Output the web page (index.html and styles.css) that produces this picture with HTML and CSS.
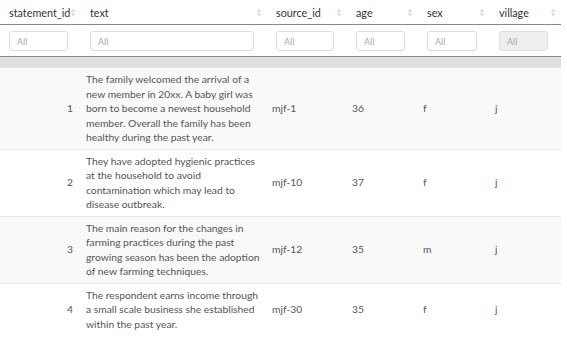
FILE: index.html
```html
<!DOCTYPE html>
<html lang="en">
<head>
    <meta charset="UTF-8">
    <title>Statements</title>
    <link rel="stylesheet" href="styles.css">
</head>
<body>
    <table class="data-table">
        <colgroup>
            <col class="c-id">
            <col class="c-text">
            <col class="c-src">
            <col class="c-age">
            <col class="c-sex">
            <col class="c-village">
        </colgroup>
        <thead>
            <tr class="head-row">
                <th><div class="th-inner"><span>statement_id</span><span class="sort"></span></div></th>
                <th><div class="th-inner"><span>text</span><span class="sort"></span></div></th>
                <th><div class="th-inner"><span>source_id</span><span class="sort"></span></div></th>
                <th><div class="th-inner"><span>age</span><span class="sort"></span></div></th>
                <th><div class="th-inner"><span>sex</span><span class="sort"></span></div></th>
                <th><div class="th-inner"><span>village</span><span class="sort"></span></div></th>
            </tr>
            <tr class="filter-row">
                <td><input type="text" placeholder="All"></td>
                <td><input type="text" placeholder="All"></td>
                <td><input type="text" placeholder="All"></td>
                <td><input type="text" placeholder="All"></td>
                <td><input type="text" placeholder="All"></td>
                <td><input type="text" placeholder="All" disabled></td>
            </tr>
        </thead>
        <tbody>
            <tr class="spacer"><td colspan="6"></td></tr>
            <tr class="odd">
                <td class="num">1</td>
                <td class="txt">The family welcomed the arrival of a new member in 20xx. A baby girl was born to become a newest household member. Overall the family has been healthy during the past year.</td>
                <td>mjf-1</td>
                <td>36</td>
                <td>f</td>
                <td>j</td>
            </tr>
            <tr>
                <td class="num">2</td>
                <td class="txt">They have adopted hygienic practices at the household to avoid contamination which may lead to disease outbreak.</td>
                <td>mjf-10</td>
                <td>37</td>
                <td>f</td>
                <td>j</td>
            </tr>
            <tr class="odd">
                <td class="num">3</td>
                <td class="txt">The main reason for the changes in farming practices during the past growing season has been the adoption of new farming techniques.</td>
                <td>mjf-12</td>
                <td>35</td>
                <td>m</td>
                <td>j</td>
            </tr>
            <tr>
                <td class="num">4</td>
                <td class="txt">The respondent earns income through a small scale business she established within the past year.</td>
                <td>mjf-30</td>
                <td>35</td>
                <td>f</td>
                <td>j</td>
            </tr>
        </tbody>
    </table>
</body>
</html>
```

FILE: styles.css
```css
body {
    margin: 0;
    background: #fff;
    font-family: Lato, "Open Sans", sans-serif;
    color: #555;
}
.data-table {
    width: 561px;
    border-collapse: collapse;
    table-layout: fixed;
}
.c-id { width: 81px; }
.c-text { width: 186px; }
.c-src { width: 80px; }
.c-age { width: 71px; }
.c-sex { width: 72px; }
.c-village { width: 71px; }

.head-row th {
    height: 24px;
    padding: 0 5px 0 9px;
    font-size: 10.8px;
    font-weight: normal;
    color: #333;
    text-align: left;
    border-bottom: 1px solid #888;
}
.th-inner {
    display: flex;
    justify-content: space-between;
    align-items: center;
}
.sort {
    width: 5px;
    height: 9px;
    position: relative;
}
.sort::before,
.sort::after {
    content: "";
    position: absolute;
    left: 0;
    border-left: 2.5px solid transparent;
    border-right: 2.5px solid transparent;
}
.sort::before {
    top: 0;
    border-bottom: 4px solid #ddd;
}
.sort::after {
    bottom: 0;
    border-top: 4px solid #ddd;
}

.filter-row td {
    padding: 6px 13px 5px 9px;
    border-bottom: 1px solid #888;
}
.filter-row input {
    display: block;
    width: 100%;
    height: 20px;
    box-sizing: border-box;
    border: 1px solid #ddd;
    border-radius: 3px;
    padding: 0 7px;
    font-family: inherit;
    font-size: 9px;
    color: #555;
    background: #fff;
}
.filter-row input::placeholder {
    color: #aaa;
}
.filter-row input:disabled {
    background: #eee;
    border-color: #ddd;
}

.spacer td {
    height: 10px;
    padding: 0;
    background: #e0e0e0;
}
tbody td {
    padding: 4px 4px 4px 5px;
    font-size: 10.3px;
    line-height: 14.5px;
    vertical-align: middle;
    border-top: 1px solid #e8e8e8;
}
tbody td.txt {
    padding-right: 6px;
}
tbody tr.spacer td {
    border-top: none;
}
tbody tr.odd td {
    background: #f9f9f9;
}
tbody td.num {
    text-align: right;
    padding-right: 8px;
}
```
